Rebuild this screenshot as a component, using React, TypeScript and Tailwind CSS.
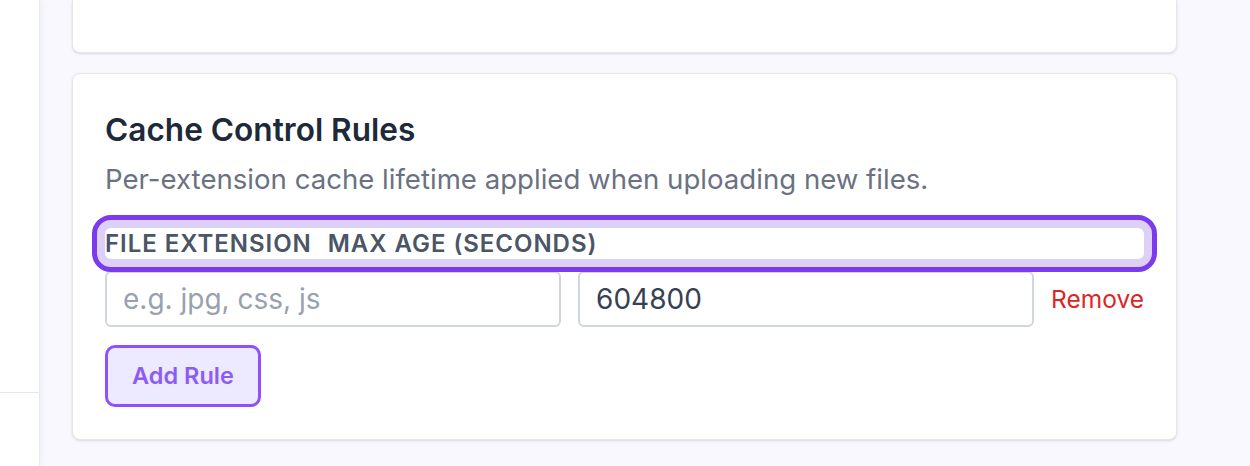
export default function App() {
  return (
    <div className="flex h-[466px] w-[1250px] overflow-hidden bg-[#f8f8fe] font-['Inter',sans-serif]">
      {/* Sidebar */}
      <aside className="flex w-[40px] shrink-0 flex-col border-r border-[#e8e8f0] bg-white shadow-[2px_0_6px_rgba(80,80,140,0.06)]">
        <div className="h-[393px] border-b border-gray-200" />
      </aside>

      {/* Main */}
      <main className="flex flex-1 flex-col gap-5 px-8">
        <div className="h-[53px] w-[1105px] rounded-b-lg border border-t-0 border-gray-200 bg-white shadow-sm" />

        <section className="w-[1105px] rounded-lg border border-gray-200 bg-white px-8 pb-8 pt-[36px] shadow-sm">
          <h2 className="text-[31.6px] leading-[40px] font-semibold text-gray-800">Cache Control Rules</h2>
          <p className="mt-[11px] text-[27.6px] leading-[36px] text-gray-500">
            Per-extension cache lifetime applied when uploading new files.
          </p>

          <div className="mt-[31px] flex h-[31px] items-center gap-4 rounded-md bg-white text-[24px] leading-[31px] font-semibold uppercase tracking-[0.04em] text-gray-600 ring-8 ring-[#ddd0f7] outline-[5px] outline-[#7c3aed] outline-offset-8">
            <span>File Extension</span>
            <span>Max Age (Seconds)</span>
          </div>

          <div className="mt-3 flex items-center gap-[17px]">
            <input
              className="h-[56px] min-w-0 flex-1 rounded-md border-2 border-gray-300 px-4 text-[28px] text-gray-700 placeholder:text-gray-400"
              placeholder="e.g. jpg, css, js"
            />
            <input
              className="h-[56px] min-w-0 flex-1 rounded-md border-2 border-gray-300 px-4 text-[28px] text-gray-700"
              defaultValue="604800"
            />
            <button className="text-[24.5px] text-[#dc2626]">Remove</button>
          </div>

          <button className="mt-[18px] h-[62px] w-[156px] rounded-[10px] border-[3px] border-violet-500 bg-violet-100 text-[23.5px] font-semibold text-[#8b5cf6]">
            Add Rule
          </button>
        </section>
      </main>
    </div>
  )
}
